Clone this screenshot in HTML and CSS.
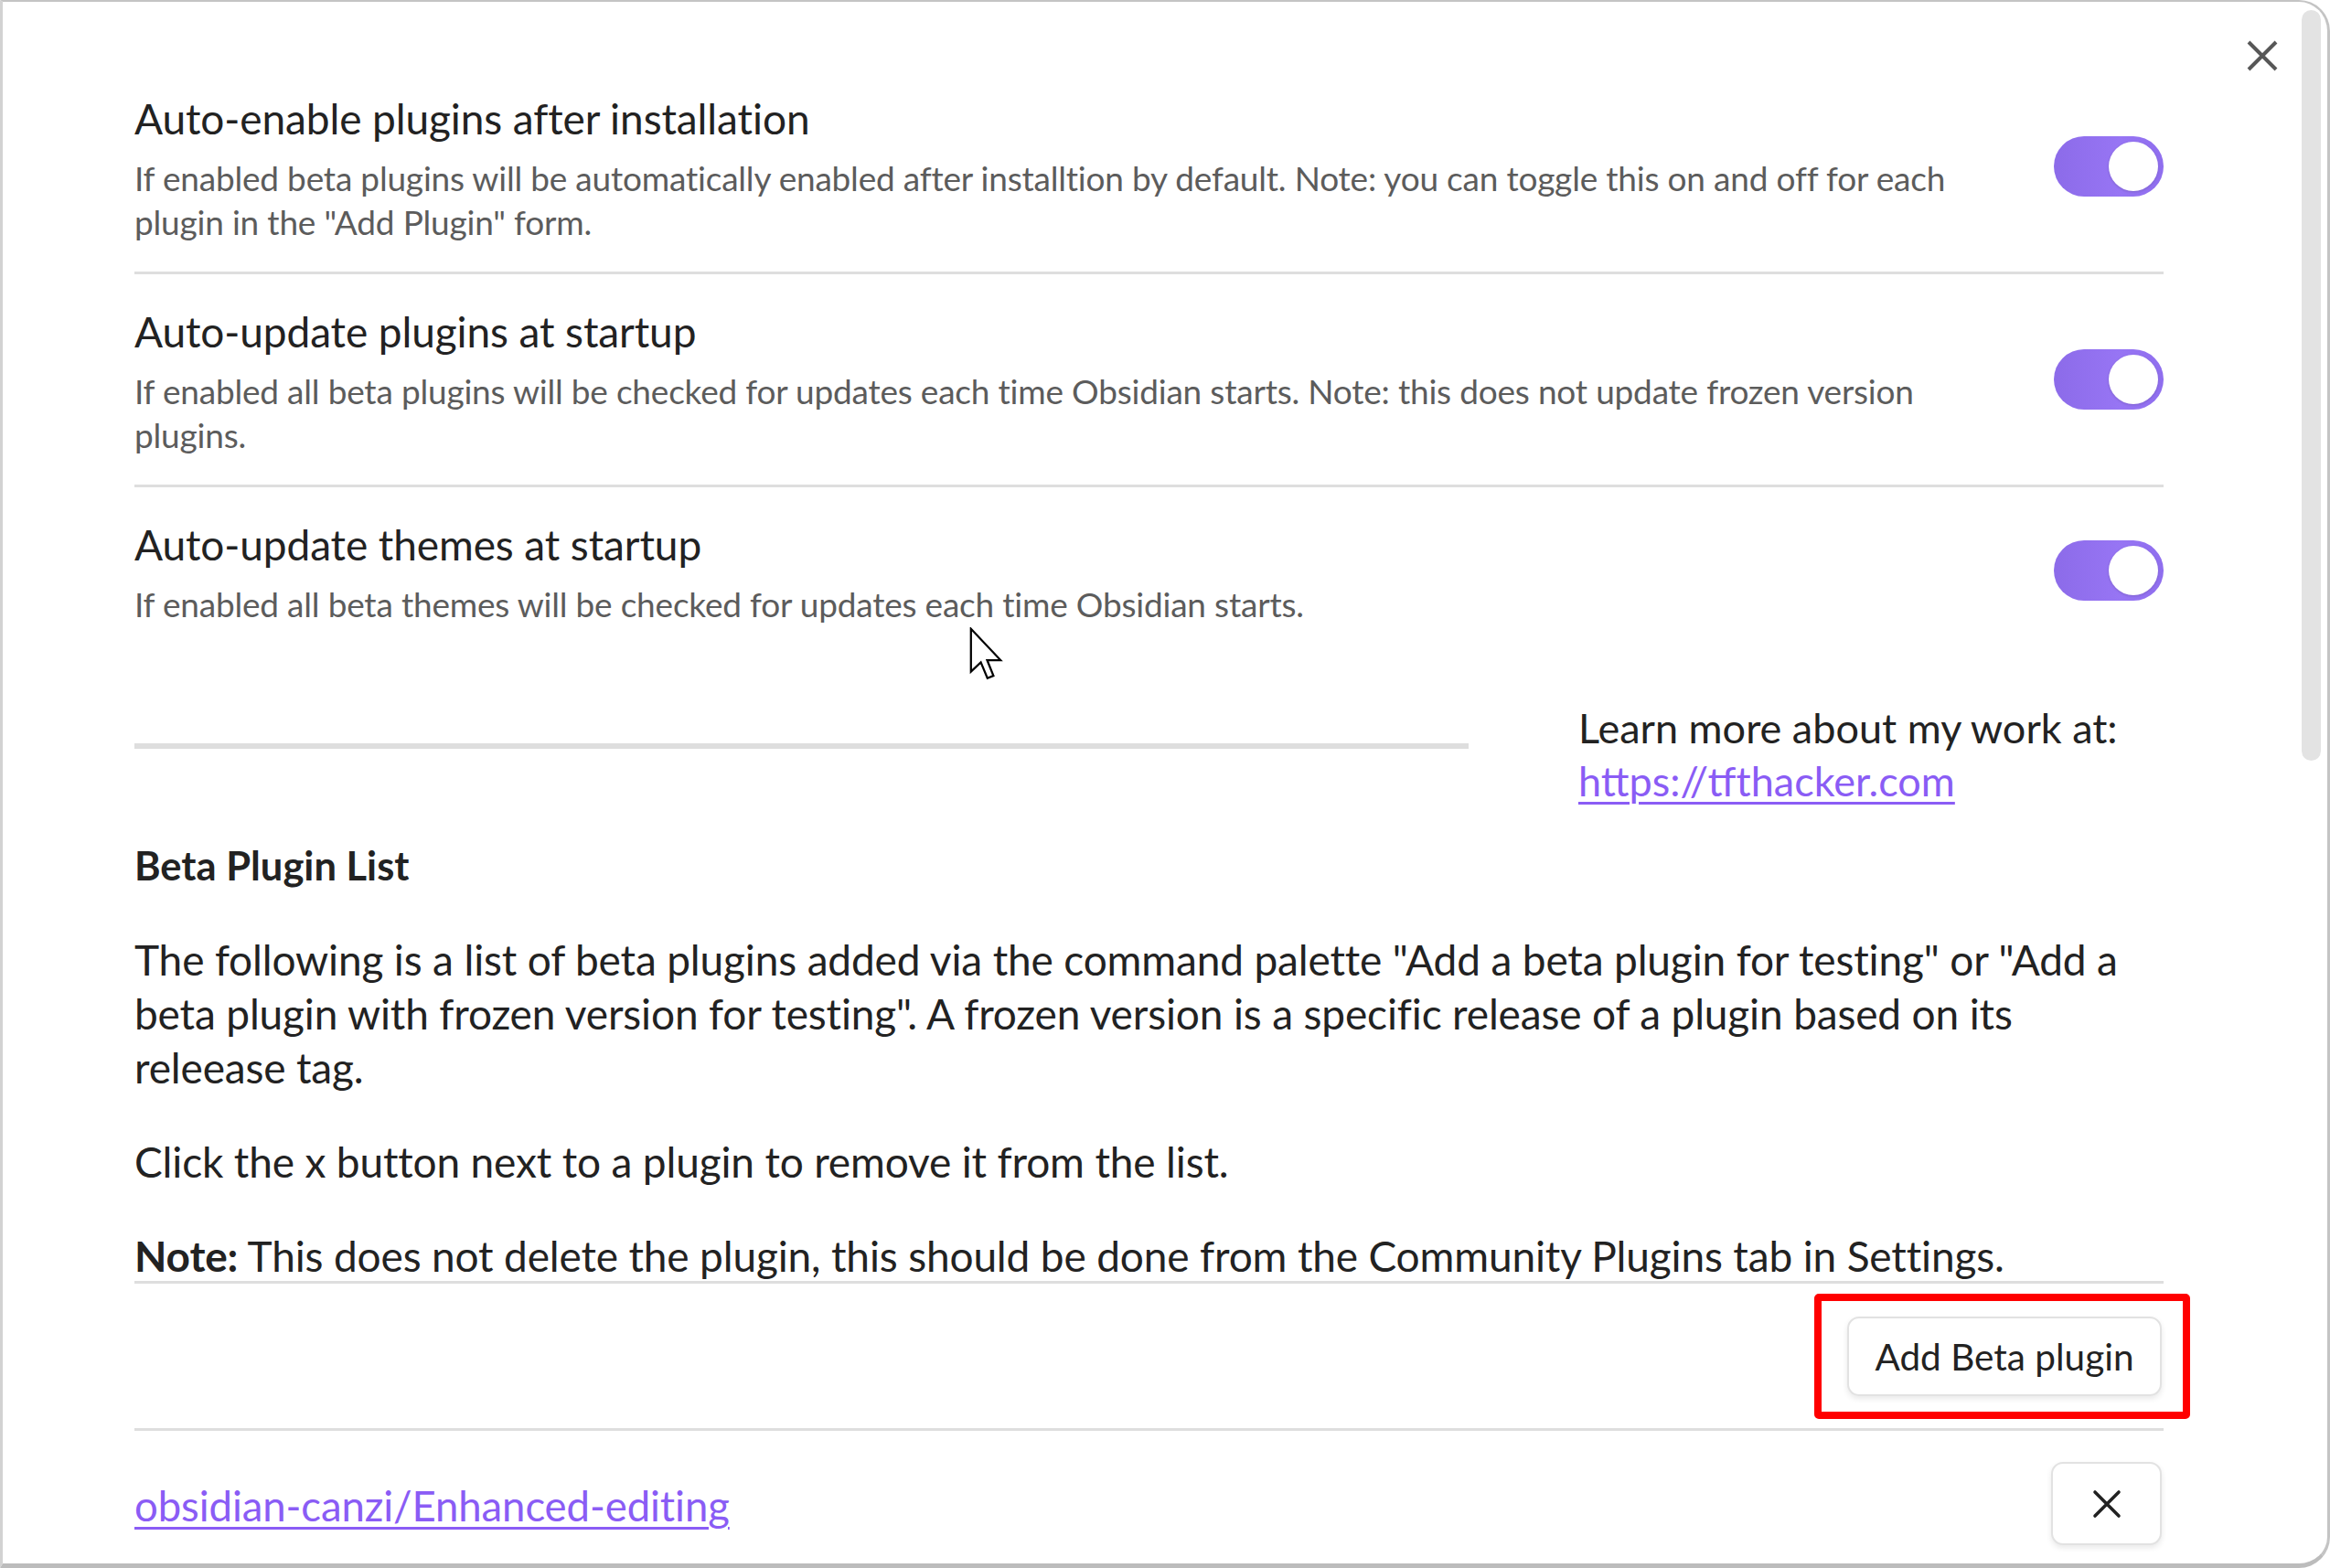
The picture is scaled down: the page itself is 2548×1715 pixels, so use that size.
FILE: index.html
```html
<!DOCTYPE html>
<html lang="en">
<head>
<meta charset="utf-8">
<title>Beta Plugin Settings</title>
<link rel="stylesheet" href="styles.css">
</head>
<body>
<div class="modal">
  <button class="modal-close" aria-label="Close">
    <svg viewBox="0 0 34 34" width="34" height="34"><path d="M2 2 L32 32 M32 2 L2 32" stroke="#575757" stroke-width="4" fill="none"/></svg>
  </button>
  <div class="scroll-thumb"></div>
  <div class="content">
    <div class="setting">
      <div class="info">
        <div class="name">Auto-enable plugins after installation</div>
        <div class="desc">If enabled beta plugins will be automatically enabled after installtion by default. Note: you can toggle this on and off for each plugin in the "Add Plugin" form.</div>
      </div>
      <div class="toggle"><span class="knob"></span></div>
    </div>
    <div class="setting bordered">
      <div class="info">
        <div class="name">Auto-update plugins at startup</div>
        <div class="desc">If enabled all beta plugins will be checked for updates each time Obsidian starts. Note: this does not update frozen version plugins.</div>
      </div>
      <div class="toggle"><span class="knob"></span></div>
    </div>
    <div class="setting bordered">
      <div class="info">
        <div class="name">Auto-update themes at startup</div>
        <div class="desc">If enabled all beta themes will be checked for updates each time Obsidian starts.</div>
      </div>
      <div class="toggle"><span class="knob"></span></div>
    </div>
    <div class="about">
      <div class="rule"></div>
      <div class="learn">Learn more about my work at:<br><a href="#" class="link">https://tfthacker.com</a></div>
    </div>
    <h3 class="heading">Beta Plugin List</h3>
    <p class="para first">The following is a list of beta plugins added via the command palette "Add a beta plugin for testing" or "Add a beta plugin with frozen version for testing". A frozen version is a specific release of a plugin based on its releease tag.</p>
    <p class="para">Click the x button next to a plugin to remove it from the list.</p>
    <p class="para note"><b>Note:</b> This does not delete the plugin, this should be done from the Community Plugins tab in Settings.</p>
    <div class="add-row">
      <div class="btn-wrap">
        <button class="btn add-btn">Add Beta plugin</button>
        <span class="highlight"></span>
      </div>
    </div>
    <div class="plugin-row">
      <a href="#" class="link plugin-link">obsidian-canzi/Enhanced-editing</a>
      <button class="btn icon-btn" aria-label="Remove">
        <svg viewBox="0 0 32 32" width="32" height="32"><path d="M3 3 L29 29 M29 3 L3 29" stroke="#222" stroke-width="3.6" fill="none" stroke-linecap="round"/></svg>
      </button>
    </div>
  </div>
  <svg class="cursor" viewBox="0 0 13 20" width="39" height="60"><path d="M0.6 0.6 L0.6 16.2 L4.2 12.8 L6.6 18.6 L8.8 17.7 L6.5 12 L11.4 12 Z" fill="#fff" stroke="#000" stroke-width="0.75" stroke-linejoin="miter"/></svg>
</div>
</body>
</html>
```

FILE: styles.css
```css
* { box-sizing: border-box; }
html, body { margin: 0; padding: 0; background: #ffffff; }
body { font-family: "Lato", "Noto Sans", sans-serif; color: #222222; }

.modal {
  position: relative;
  width: 2548px;
  height: 1715px;
  overflow: hidden;
  background: #ffffff;
  border-top: 2px solid #c4c4c4;
  border-left: 3px solid #d2d2d2;
  border-bottom: 5px solid #bcbcbc;
  border-right: 3px solid #c4c4c4;
  border-radius: 0 34px 34px 0;
}

.modal-close {
  position: absolute;
  top: 39px;
  left: 2451px;
  width: 40px;
  height: 40px;
  padding: 3px;
  border: 0;
  background: transparent;
}

.scroll-thumb {
  position: absolute;
  top: 9px;
  left: 2514px;
  width: 21px;
  height: 821px;
  border-radius: 11px;
  background: #e3e3e3;
}

.content {
  padding: 65px 179px 0 144px;
}

.setting {
  display: flex;
  align-items: center;
  padding: 34px 0 30px;
}
.setting.bordered { border-top: 3px solid #dedede; }

.info { flex: 1 1 auto; margin-right: 47px; }
.name { font-size: 46px; line-height: 58px; color: #222222; letter-spacing: -0.1px; }
.desc { margin-top: 12px; font-size: 37px; line-height: 48px; color: #5c5c5c; letter-spacing: -0.2px; }

.toggle {
  position: relative;
  flex: 0 0 120px;
  width: 120px;
  height: 66px;
  border-radius: 33px;
  background: linear-gradient(90deg, #8c6be9 0%, #9775f4 60%, #8f6eee 100%);
  margin-top: -4px;
}
.knob {
  position: absolute;
  top: 6px;
  right: 6px;
  width: 54px;
  height: 54px;
  border-radius: 50%;
  background: #ffffff;
  box-shadow: 0 1px 3px rgba(0, 0, 0, 0.15);
}

.about {
  display: grid;
  grid-template-columns: 1fr 640px;
  column-gap: 120px;
  padding-top: 52px;
}
.rule { height: 6px; background: #dedede; margin-top: 46px; }
.learn { font-size: 45px; line-height: 58px; color: #222222; }

.link {
  color: #8a5cf5;
  text-decoration: underline;
  text-decoration-thickness: 3px;
  text-underline-offset: 6px;
}

.heading {
  margin: 35px 0 0;
  font-size: 43.5px;
  line-height: 56px;
  font-weight: 700;
  color: #222222;
}

.para {
  margin: 44px 0 0;
  font-size: 46px;
  line-height: 59px;
  color: #222222;
  letter-spacing: -0.15px;
}
.para.first { margin-top: 46px; }
.para.note { border-bottom: 3px solid #dedede; line-height: 55px; margin-top: 46px; }
.para b { font-weight: 700; }

.add-row {
  display: flex;
  justify-content: flex-end;
  padding: 36px 2px 35px 0;
  border-bottom: 3px solid #dedede;
}
.btn-wrap { position: relative; }
.btn {
  display: flex;
  align-items: center;
  justify-content: center;
  height: 87px;
  padding: 0;
  font-family: "Lato", "Noto Sans", sans-serif;
  font-size: 40.5px;
  color: #222222;
  background: #ffffff;
  border: 2px solid #e2e2e2;
  border-radius: 13px;
  box-shadow: 0 3px 6px rgba(0, 0, 0, 0.09);
}
.add-btn { width: 344px; }
.highlight {
  position: absolute;
  top: -25px;
  left: -36px;
  right: -31px;
  bottom: -25px;
  border: 8px solid #ff0000;
  border-radius: 5px;
}

.plugin-row {
  display: flex;
  align-items: center;
  justify-content: space-between;
  padding: 34px 2px 0 0;
}
.plugin-link { font-size: 45.5px; line-height: 59px; margin-top: 4px; letter-spacing: -0.1px; }
.icon-btn { width: 121px; height: 91px; padding: 0; }

.cursor {
  position: absolute;
  left: 1057px;
  top: 684px;
}
```
